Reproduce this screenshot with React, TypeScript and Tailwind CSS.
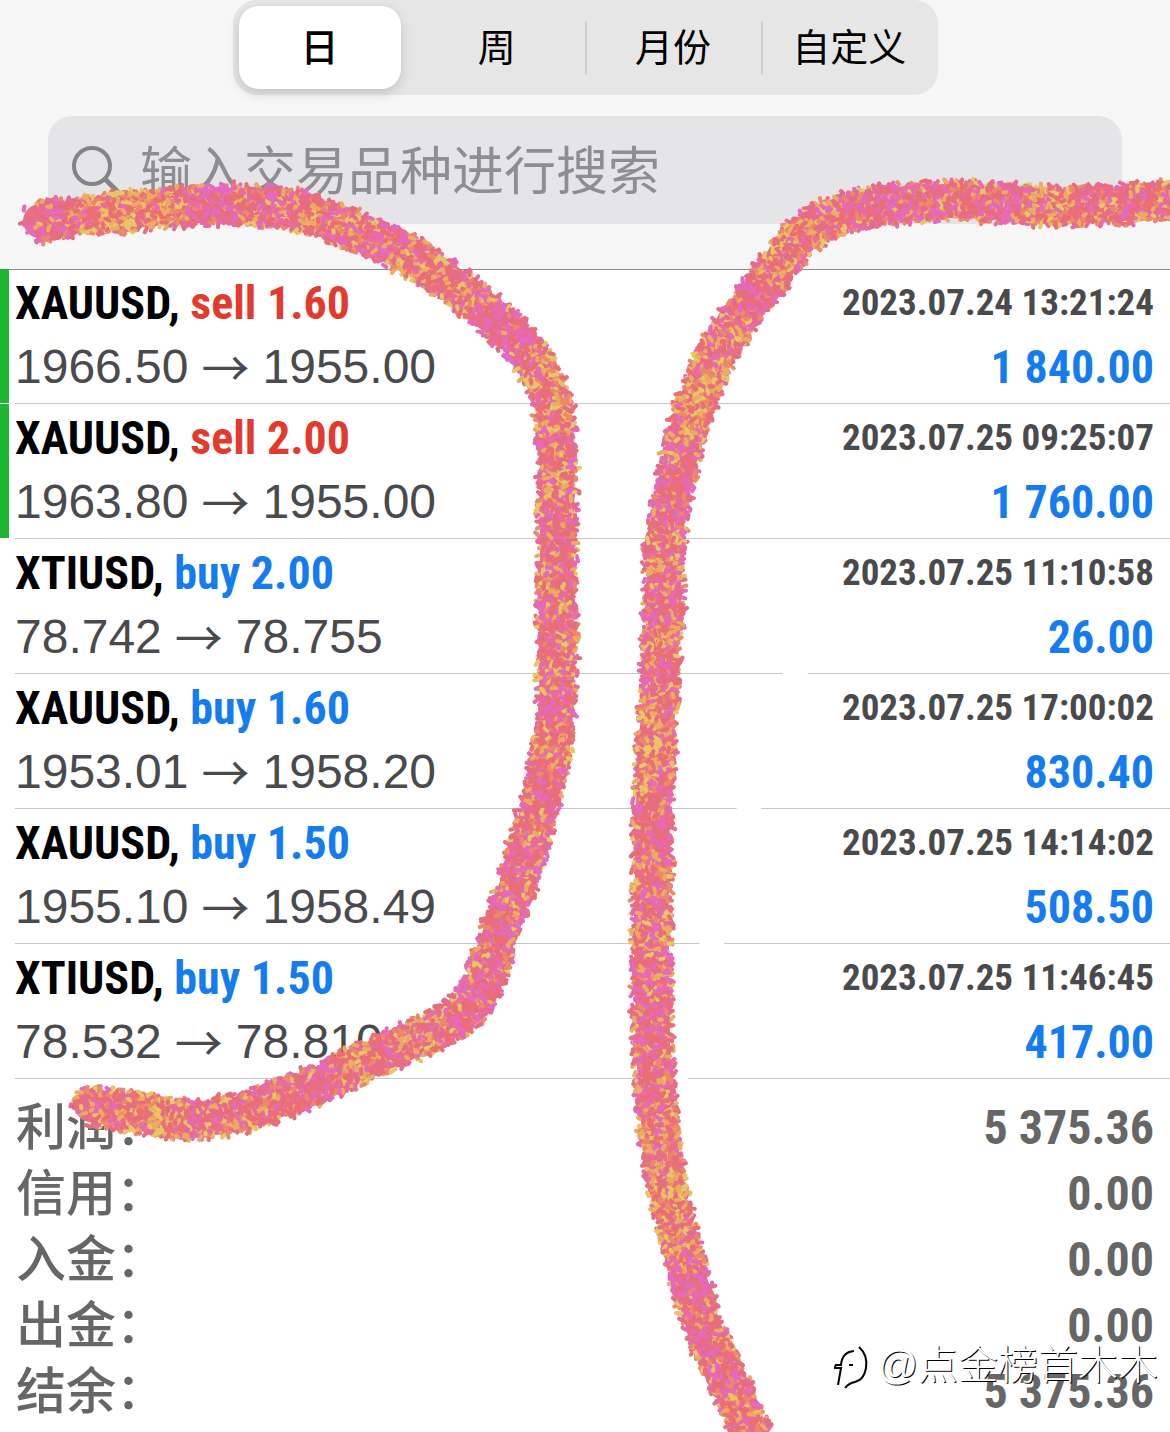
type Point = [number, number]

const periods = ['日', '周', '月份', '自定义']

const deals = [
  { symbol: 'XAUUSD', side: 'sell', volume: '1.60', open: '1966.50', close: '1955.00', time: '2023.07.24 13:21:24', profit: '1 840.00', marked: true },
  { symbol: 'XAUUSD', side: 'sell', volume: '2.00', open: '1963.80', close: '1955.00', time: '2023.07.25 09:25:07', profit: '1 760.00', marked: true },
  { symbol: 'XTIUSD', side: 'buy', volume: '2.00', open: '78.742', close: '78.755', time: '2023.07.25 11:10:58', profit: '26.00', marked: false },
  { symbol: 'XAUUSD', side: 'buy', volume: '1.60', open: '1953.01', close: '1958.20', time: '2023.07.25 17:00:02', profit: '830.40', marked: false },
  { symbol: 'XAUUSD', side: 'buy', volume: '1.50', open: '1955.10', close: '1958.49', time: '2023.07.25 14:14:02', profit: '508.50', marked: false },
  { symbol: 'XTIUSD', side: 'buy', volume: '1.50', open: '78.532', close: '78.810', time: '2023.07.25 11:46:45', profit: '417.00', marked: false },
]

const totals = [
  { label: '利润', value: '5 375.36' },
  { label: '信用', value: '0.00' },
  { label: '入金', value: '0.00' },
  { label: '出金', value: '0.00' },
  { label: '结余', value: '5 375.36' },
]

const leftStroke: Point[] = [
  [40, 221], [100, 214], [180, 207], [250, 205], [300, 211], [350, 229], [400, 251], [440, 275], [490, 315],
  [525, 350], [550, 395], [557, 450], [557, 550], [557, 680], [552, 750], [535, 820], [515, 890], [492, 955],
  [475, 1000], [440, 1028], [380, 1055], [320, 1083], [250, 1110], [190, 1120], [130, 1112], [90, 1105],
]

const rightStroke: Point[] = [
  [1180, 199], [1090, 206], [1020, 204], [950, 201], [870, 207], [820, 223], [790, 250], [765, 285], [725, 340],
  [697, 400], [680, 460], [665, 540], [664, 600], [660, 680], [654, 780], [652, 870], [652, 950], [653, 1040],
  [658, 1120], [668, 1190], [685, 1260], [705, 1330], [735, 1395], [756, 1445],
]

// ordered from violet pink to yellow, a drifting tint picks from it
const inks = ['#e26ac4', '#e66bb4', '#e56a96', '#e66c80', '#e96f74', '#ec8a68', '#ebab60', '#e8c565']

// small seeded generator, so the crayon looks the same on every render
function createRandom(seed: number) {
  let s = seed
  return () => {
    s = (s * 1664525 + 1013904223) % 4294967296
    return s / 4294967296
  }
}

function smooth(points: Point[]): Point[] {
  const out: Point[] = []
  for (let i = 0; i < points.length - 1; i++) {
    const p0 = points[Math.max(i - 1, 0)]
    const p1 = points[i]
    const p2 = points[i + 1]
    const p3 = points[Math.min(i + 2, points.length - 1)]
    const steps = Math.max(2, Math.round(Math.hypot(p2[0] - p1[0], p2[1] - p1[1]) / 3))
    for (let k = 0; k < steps; k++) {
      const t = k / steps
      const at = (a: number) =>
        0.5 * (2 * p1[a] + (p2[a] - p0[a]) * t + (2 * p0[a] - 5 * p1[a] + 4 * p2[a] - p3[a]) * t * t + (3 * p1[a] - p0[a] - 3 * p2[a] + p3[a]) * t * t * t)
      out.push([at(0), at(1)])
    }
  }
  return out
}

// short fibres scattered over the stroke, split in layers so that colours overlap
function fibres(points: Point[], seed: number) {
  const random = createRandom(seed)
  const passes = 4
  const layers = Array.from({ length: inks.length * passes }, () => '')
  const line = smooth(points)
  let tint = 3
  line.forEach(([x, y], i) => {
    if (i % 5 === 0) tint = 1.5 + random() * 4
    for (let n = 0; n < 17; n++) {
      const around = random() * Math.PI * 2
      const reach = Math.sqrt(random()) * 21
      const angle = random() * Math.PI * 2
      const half = 1 + random() * 2
      const cx = x + Math.cos(around) * reach
      const cy = y + Math.sin(around) * reach
      const dx = Math.cos(angle) * half
      const dy = Math.sin(angle) * half
      const drift = (random() + random() - 1) * 5
      const ink = Math.max(0, Math.min(inks.length - 1, Math.round(tint + drift)))
      const pass = Math.floor(random() * passes)
      layers[pass * inks.length + ((ink * 3 + pass) % inks.length)] +=
        `M${(cx - dx).toFixed(1)} ${(cy - dy).toFixed(1)}L${(cx + dx).toFixed(1)} ${(cy + dy).toFixed(1)}`
    }
  })
  const base = 'M' + line.map(([x, y]) => `${x.toFixed(1)} ${y.toFixed(1)}`).join('L')
  const marks = layers.map((d, i) => {
    const pass = Math.floor(i / inks.length)
    // 3 is its own inverse modulo 8
    const ink = (((i % inks.length) - pass + inks.length) * 3) % inks.length
    return { d, color: inks[ink] }
  })
  return { base, marks }
}

const strokes = [fibres(leftStroke, 7), fibres(rightStroke, 41)]

function Crayon() {
  return (
    <svg className="pointer-events-none absolute top-0 left-0" width="1170" height="1432" viewBox="0 0 1170 1432" fill="none" aria-hidden="true">
      <path d="M808 640C780 710 760 770 749 808C738 860 722 900 712 943C700 990 685 1030 674 1085" stroke="#fff" strokeWidth="24" />
      {strokes.map((stroke, s) => (
        <g key={s} strokeWidth="4" strokeLinecap="round">
          <path d={stroke.base} stroke="#e97080" strokeWidth="34" strokeLinejoin="round" />
          {stroke.marks.map((mark, i) => (
            <path key={i} d={mark.d} stroke={mark.color} />
          ))}
        </g>
      ))}
    </svg>
  )
}

function SearchIcon() {
  return (
    <svg className="size-14 shrink-0" viewBox="0 0 56 56" fill="none" stroke="currentColor" aria-hidden="true">
      <circle cx="24" cy="22" r="18" strokeWidth="4" />
      <path d="M37 35L53 51" strokeWidth="5" />
    </svg>
  )
}

function Watermark() {
  return (
    <div className="absolute right-3 bottom-11 flex items-center gap-1 text-white">
      <svg className="h-12 w-10" viewBox="0 0 40 48" fill="none" stroke="#000" strokeWidth="2" aria-hidden="true">
        <path d="M5 44L8 27H2Q2 25 3 24H8Q9 11 21 10" />
        <path d="M16 24H20" />
        <path d="M26 6Q35 14 33 27Q31 39 22 41Q16 42 12 47" />
      </svg>
      <span className="font-['Liberation_Sans','Noto_Sans_CJK_SC',sans-serif] text-[40px] leading-[48px] font-light [text-shadow:1px_1px_0_#000]">
        @点金榜首木木
      </span>
    </div>
  )
}

export default function App() {
  return (
    <div className="relative overflow-hidden bg-white font-['Liberation_Sans','Noto_Sans_CJK_SC',sans-serif]">
      <header className="h-[270px] border-b border-[#8a8a8c] bg-[#f6f6f6]">
        <div className="mx-auto grid h-[95px] w-[705px] grid-cols-4 rounded-3xl bg-[#e6e6e7] py-[6px]">
          {periods.map((period, i) => (
            <div key={period} className="relative flex">
              <button
                className={
                  i === 0
                    ? 'mr-2 ml-[6px] flex-1 rounded-[20px] bg-white text-[38px] leading-none font-medium shadow-[0_4px_12px_rgba(0,0,0,0.16)]'
                    : 'flex-1 text-[38px] leading-none'
                }
              >
                {period}
              </button>
              {i > 1 && <span className="absolute top-[15px] left-0 h-[53px] w-[2px] bg-[#cfcfd2]" />}
            </div>
          ))}
        </div>
        <label className="mx-12 mt-[21px] flex h-[108px] items-center gap-4 rounded-3xl bg-[#e5e5e7] px-5 pt-1 text-[#848487]">
          <SearchIcon />
          <input
            type="search"
            aria-label="搜索"
            placeholder="输入交易品种进行搜索"
            className="min-w-0 flex-1 bg-transparent text-[52px] leading-[72px] outline-none placeholder:text-[#8e8e91] placeholder:opacity-100"
          />
        </label>
      </header>

      <ul className="-mt-px">
        {deals.map((deal) => (
          <li key={deal.time} className="flex h-[135px]">
            <div className={deal.marked ? 'mb-px w-[9px] bg-[#1db534]' : 'w-[9px]'} />
            <div className="ml-[6px] flex flex-1 justify-between border-b border-[#c6c6c8] pr-4 whitespace-nowrap">
              <div>
                <div className="pt-[2px] font-['Roboto_Condensed',sans-serif] text-[46px] leading-[64px] font-bold text-black">
                  {deal.symbol},{' '}
                  <span className={deal.side === 'sell' ? 'text-[#e23b2e]' : 'text-[#157cf0]'}>
                    {deal.side} {deal.volume}
                  </span>
                </div>
                <div className="flex items-center gap-[13px] text-[48px] leading-[64px] text-[#4a4a4d]">
                  <span>{deal.open}</span>
                  <span className="pb-1 font-['Noto_Sans_CJK_SC',sans-serif] leading-[60px]">→</span>
                  <span>{deal.close}</span>
                </div>
              </div>
              <div className="text-right font-['Roboto_Condensed',sans-serif] font-bold">
                <div className="pt-[2px] text-[37px] leading-[64px] text-[#4a4a4d]">{deal.time}</div>
                <div className="text-[46px] leading-[64px] text-[#157cf0]">{deal.profit}</div>
              </div>
            </div>
          </li>
        ))}
      </ul>

      <dl className="pt-4 pb-2 pl-4 text-[50px] leading-[66px] font-medium text-[#666]">
        {totals.map((total) => (
          <div key={total.label} className="flex justify-between pr-4">
            <dt>{total.label}：</dt>
            <dd className="font-['Roboto_Condensed',sans-serif] text-[48px] font-bold">{total.value}</dd>
          </div>
        ))}
      </dl>

      <Crayon />
      <Watermark />
    </div>
  )
}
